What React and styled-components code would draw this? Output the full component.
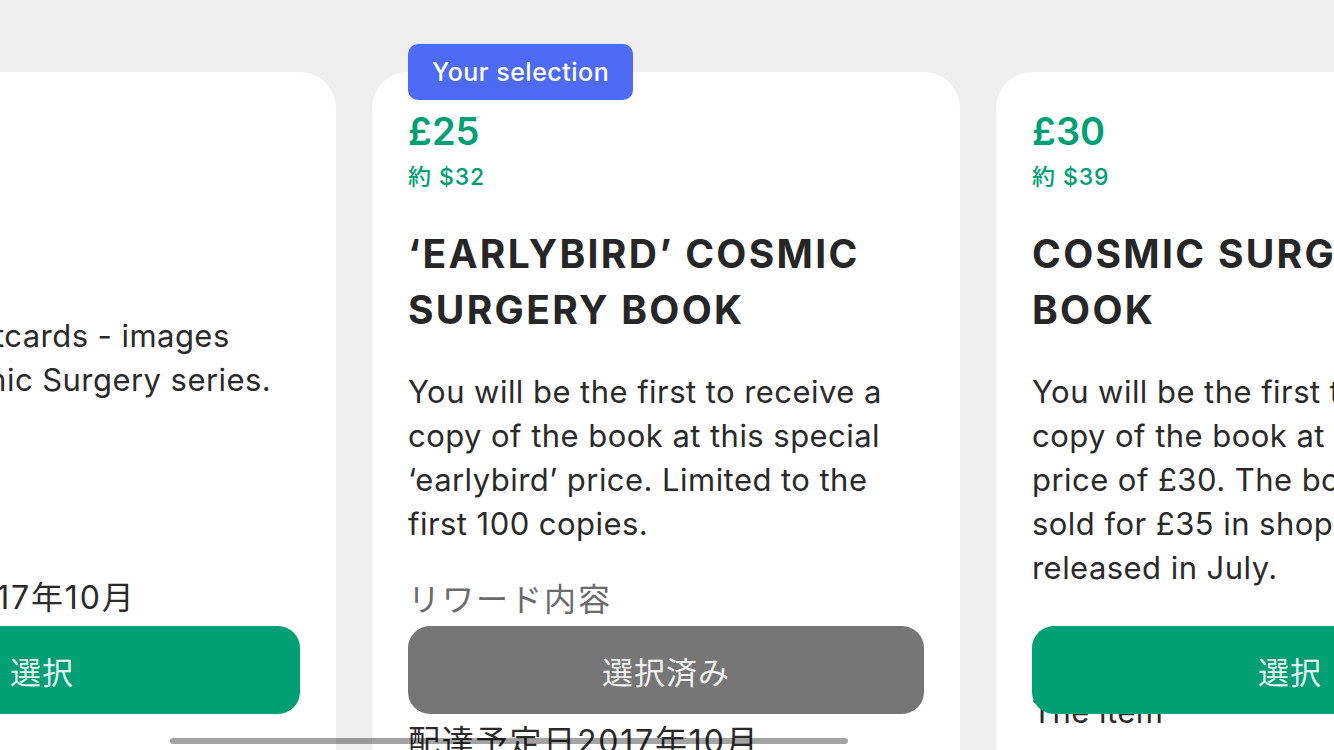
import React from 'react';
import styled, { createGlobalStyle } from 'styled-components';

const GlobalStyle = createGlobalStyle`
  html, body {
    margin: 0;
    padding: 0;
    background: #efefef;
    overflow: hidden;
  }
  body {
    font-family: 'Inter', 'Noto Sans CJK JP', sans-serif;
    color: #2a2a2a;
    -webkit-font-smoothing: antialiased;
  }
`;

const Page = styled.div`
  position: relative;
  width: 1334px;
  height: 750px;
  overflow: hidden;
  background: #efefef;
`;

const Track = styled.div`
  display: flex;
  gap: 36px;
  padding-top: 72px;
  margin-left: ${(p) => p.offset}px;
`;

const Card = styled.div`
  position: relative;
  flex: 0 0 588px;
  min-height: 720px;
  box-sizing: border-box;
  padding: 36px 36px 0;
  display: flex;
  flex-direction: column;
  background: #fff;
  border-radius: 36px;
`;

const Badge = styled.div`
  position: absolute;
  top: -28px;
  left: 36px;
  height: 56px;
  padding: 0 24px;
  display: flex;
  align-items: center;
  background: #4d6bf6;
  color: #fff;
  border-radius: 10px;
  font-size: 25px;
  font-weight: 500;
  letter-spacing: 0.5px;
`;

const Price = styled.div`
  font-size: 38px;
  line-height: 46px;
  font-weight: 600;
  color: #00a074;
`;

const Approx = styled.div`
  margin-top: 8px;
  font-size: 23px;
  line-height: 30px;
  font-weight: 500;
  color: #00a074;
  letter-spacing: 0.9px;
`;

const Title = styled.h2`
  margin: 34px 0 0;
  max-width: 490px;
  font-size: 39px;
  line-height: 56px;
  font-weight: 700;
  color: #262626;
  letter-spacing: 2.3px;
`;

const Description = styled.p`
  margin: 32px 0 0;
  font-size: 31px;
  line-height: 44px;
  letter-spacing: 0.45px;
  color: #2a2a2a;
`;

const SectionLabel = styled.div`
  margin-top: 32px;
  font-size: 32px;
  line-height: 44px;
  letter-spacing: 2px;
  color: #6b6b6b;
`;

const Item = styled.div`
  margin-top: 24px;
  font-size: 31px;
  line-height: 44px;
  letter-spacing: 0.45px;
  color: #2a2a2a;
`;

const Delivery = styled.div`
  margin-top: 30px;
  font-size: 32px;
  line-height: 44px;
  letter-spacing: 1.8px;
  color: #2a2a2a;
`;

const SelectButton = styled.button`
  position: absolute;
  top: 554px;
  left: 36px;
  right: 36px;
  height: 88px;
  border: none;
  border-radius: 22px;
  background: ${(p) => (p.selected ? '#767676' : '#00a074')};
  color: rgba(255, 255, 255, 0.92);
  font-family: 'Noto Sans CJK JP', sans-serif;
  font-size: 31px;
  letter-spacing: 1px;
  cursor: pointer;
`;

const ScrollIndicator = styled.div`
  position: absolute;
  left: 170px;
  top: 738px;
  width: 678px;
  height: 6px;
  border-radius: 3px;
  background: rgba(0, 0, 0, 0.36);
`;

const rewards = [
  {
    price: '£20',
    approx: '約 $26',
    title: 'PRINTS',
    description: 'A set of 5 postcards - images from the Cosmic Surgery series.',
    item: 'Postcards',
  },
  {
    price: '£25',
    approx: '約 $32',
    title: '‘EARLYBIRD’ COSMIC SURGERY BOOK',
    description:
      'You will be the first to receive a copy of the book at this special ‘earlybird’ price. Limited to the first 100 copies.',
    item: 'Cosmic Surgery book',
    selected: true,
  },
  {
    price: '£30',
    approx: '約 $39',
    title: 'COSMIC SURGERY BOOK',
    description:
      'You will be the first to receive a copy of the book at the special price of £30. The book will be sold for £35 in shops when it is released in July.',
    item: 'The item',
  },
];

const RewardCard = ({ reward }) => (
  <Card>
    {reward.selected && <Badge>Your selection</Badge>}
    <Price>{reward.price}</Price>
    <Approx>{reward.approx}</Approx>
    <Title>{reward.title}</Title>
    <Description>{reward.description}</Description>
    <SectionLabel>リワード内容</SectionLabel>
    <Item>{reward.item}</Item>
    <Delivery>配達予定日2017年10月</Delivery>
    <SelectButton selected={reward.selected}>
      {reward.selected ? '選択済み' : '選択'}
    </SelectButton>
  </Card>
);

const App = () => (
  <Page>
    <GlobalStyle />
    <Track offset={-252}>
      {rewards.map((r) => (
        <RewardCard key={r.price} reward={r} />
      ))}
    </Track>
    <ScrollIndicator />
  </Page>
);

export default App;
